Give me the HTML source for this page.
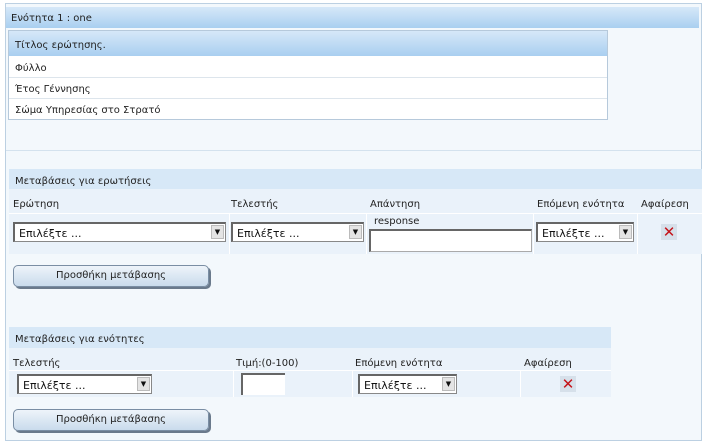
<!DOCTYPE html>
<html><head><meta charset="utf-8"><style>
*{margin:0;padding:0;box-sizing:border-box}
body{width:706px;height:445px;background:#fff;font-family:"DejaVu Sans","Liberation Sans",sans-serif;font-size:10px;color:#222;position:relative;overflow:hidden}
.a{position:absolute}
.outer{left:5px;top:3px;width:697px;height:438px;background:#f3f8fc;border:1px solid #bcd0e2}
.hdr{background:linear-gradient(#d6e8f8,#a9cff0);}
.sec{background:#d7e8f7;}
.t{line-height:1;margin-top:2px}
.sel{background:#fff;border:1px solid #888;border-top:2px solid #666;border-left:2px solid #666;font-size:11px;padding:3px 4px;color:#111}
.arr{position:absolute;right:1px;top:1px;width:13px;height:14px;background:#e4e4e4;border:1px solid #bbb;font-size:7px;text-align:center;line-height:13px}
.btn{border:1px solid #7a8ea4;border-radius:5px;background:linear-gradient(#eef4fa,#c9dbec);box-shadow:2px 2px 0 #6a7a8c;text-align:center;font-size:10px;line-height:20px}
.x{color:#c4141a;font-weight:bold;font-size:15px;background:#d6e0ea;width:16px;height:16px;line-height:16px;text-align:center}
.cell{background:#eaf2fa}
</style></head><body>
<div class="a outer"></div>
<div class="a hdr" style="left:6px;top:7px;width:693px;height:21px"></div>
<div class="a t" style="left:11px;top:12px">Ενότητα 1 : one</div>
<div class="a" style="left:8px;top:30px;width:600px;height:90px;background:#fff;border:1px solid #b6c9db"></div>
<div class="a hdr" style="left:9px;top:31px;width:598px;height:25px"></div>
<div class="a t" style="left:15px;top:39px">Τίτλος ερώτησης.</div>
<div class="a t" style="left:15px;top:62px">Φύλλο</div>
<div class="a" style="left:9px;top:77px;width:598px;height:1px;background:#dde5ec"></div>
<div class="a t" style="left:15px;top:83px">Έτος Γέννησης</div>
<div class="a" style="left:9px;top:98px;width:598px;height:1px;background:#dde5ec"></div>
<div class="a t" style="left:15px;top:104px">Σώμα Υπηρεσίας στο Στρατό</div>
<div class="a" style="left:6px;top:150px;width:696px;height:1px;background:#d4e2ee"></div>

<div class="a sec" style="left:9px;top:169px;width:693px;height:20px"></div>
<div class="a t" style="left:15px;top:175px">Μεταβάσεις για ερωτήσεις</div>
<div class="a cell" style="left:9px;top:189px;width:693px;height:65px"></div>
<div class="a t" style="left:13px;top:198px">Ερώτηση</div>
<div class="a t" style="left:231px;top:198px">Τελεστής</div>
<div class="a t" style="left:370px;top:198px">Απάντηση</div>
<div class="a t" style="left:537px;top:198px">Επόμενη ενότητα</div>
<div class="a t" style="left:641px;top:198px">Αφαίρεση</div>
<div class="a" style="left:9px;top:213px;width:693px;height:1px;background:#fff"></div>
<div class="a" style="left:229px;top:213px;width:1px;height:41px;background:#fff"></div>
<div class="a" style="left:366px;top:213px;width:1px;height:41px;background:#fff"></div>
<div class="a" style="left:533px;top:213px;width:1px;height:41px;background:#fff"></div>
<div class="a" style="left:637px;top:213px;width:1px;height:41px;background:#fff"></div>
<div class="a sel" style="left:13px;top:222px;width:213px;height:20px">Επιλέξτε ...<div class="arr">▼</div></div>
<div class="a sel" style="left:231px;top:222px;width:133px;height:20px">Επιλέξτε ...<div class="arr">▼</div></div>
<div class="a t" style="left:374px;top:215px">response</div>
<div class="a" style="left:369px;top:229px;width:163px;height:23px;background:#fff;border:1px solid #aaa;border-top:2px solid #666;border-left:2px solid #666"></div>
<div class="a sel" style="left:536px;top:222px;width:98px;height:20px">Επιλέξτε ...<div class="arr">▼</div></div>
<div class="a x" style="left:661px;top:224px">✕</div>
<div class="a btn" style="left:13px;top:265px;width:196px;height:22px">Προσθήκη μετάβασης</div>

<div class="a sec" style="left:9px;top:327px;width:602px;height:21px"></div>
<div class="a t" style="left:15px;top:333px">Μεταβάσεις για ενότητες</div>
<div class="a cell" style="left:9px;top:348px;width:602px;height:49px"></div>
<div class="a t" style="left:13px;top:357px">Τελεστής</div>
<div class="a t" style="left:236px;top:357px">Τιμή:(0-100)</div>
<div class="a t" style="left:355px;top:357px">Επόμενη ενότητα</div>
<div class="a t" style="left:524px;top:357px">Αφαίρεση</div>
<div class="a" style="left:9px;top:370px;width:602px;height:1px;background:#fff"></div>
<div class="a" style="left:233px;top:370px;width:1px;height:27px;background:#fff"></div>
<div class="a" style="left:352px;top:370px;width:1px;height:27px;background:#fff"></div>
<div class="a" style="left:520px;top:370px;width:1px;height:27px;background:#fff"></div>
<div class="a sel" style="left:17px;top:374px;width:135px;height:20px">Επιλέξτε ...<div class="arr">▼</div></div>
<div class="a" style="left:241px;top:373px;width:44px;height:22px;background:#fff;border-top:2px solid #666;border-left:2px solid #666"></div>
<div class="a sel" style="left:358px;top:374px;width:99px;height:20px">Επιλέξτε ...<div class="arr">▼</div></div>
<div class="a x" style="left:560px;top:376px">✕</div>
<div class="a btn" style="left:13px;top:409px;width:196px;height:22px">Προσθήκη μετάβασης</div>
</body></html>
